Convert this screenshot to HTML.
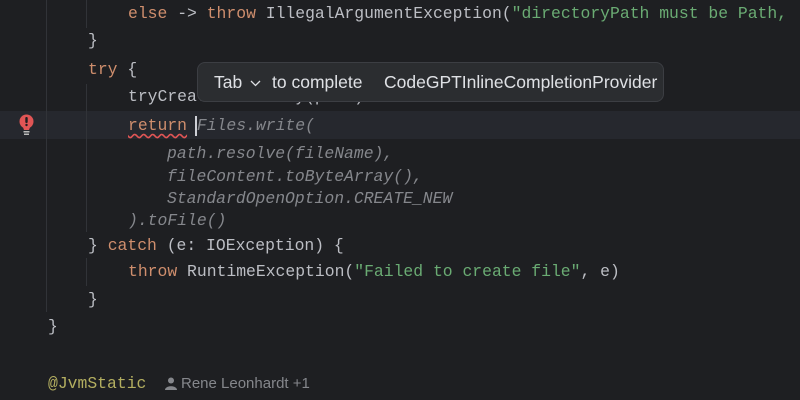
<!DOCTYPE html>
<html><head><meta charset="utf-8"><style>
body{margin:0;width:800px;height:400px;overflow:hidden;background:#1e1f22;position:relative;font-family:"Liberation Mono",monospace;font-size:16.4px;color:#bcbec4}
.l{position:absolute;white-space:pre;line-height:20px;height:20px}
.k{color:#cf8e6d}.s{color:#6aab73}.g{color:#85878c;font-style:italic}.a{color:#b3ae60}
.guide{position:absolute;width:1px;background:#313338}
.pop{position:absolute;left:197px;top:62px;width:467px;height:40px;background:#2b2d30;border:1px solid #3c3e43;border-radius:8px;box-sizing:border-box;font-family:"Liberation Sans",sans-serif;font-size:17.5px;color:#dfe1e5}
.pop span{position:absolute;top:9px;line-height:20px;white-space:pre}
</style></head><body>
<div style="position:absolute;left:0;top:111px;width:800px;height:28px;background:#26282e"></div>
<div class="guide" style="left:46px;top:0;height:312px"></div>
<div class="guide" style="left:86px;top:0;height:28px"></div>
<div class="guide" style="left:86px;top:84px;height:148px"></div>
<div class="guide" style="left:86px;top:258px;height:28px"></div>
<svg style="position:absolute;left:18px;top:114px" width="17" height="22" viewBox="0 0 17 22"><circle cx="8.5" cy="7.5" r="7" fill="#e05555"/><path d="M4.5 12 L12.5 12 L11 16 L6 16 Z" fill="#e05555"/><rect x="7.3" y="3" width="2.4" height="6" rx="1" fill="#1e1f22"/><circle cx="8.5" cy="11" r="1.2" fill="#1e1f22"/><rect x="5.5" y="17" width="6" height="1.5" fill="#bbb"/><rect x="6" y="19.5" width="5" height="1.5" fill="#bbb"/></svg>
<div class="l" style="left:128px;top:4px"><span class="k">else</span> -&gt; <span class="k">throw</span> IllegalArgumentException(<span class="s">"directoryPath must be Path,</span></div>
<div class="l" style="left:88px;top:31px">}</div>
<div class="l" style="left:88px;top:60px"><span class="k">try</span> {</div>
<div class="l" style="left:128px;top:87px">tryCreateDirectory(path)</div>
<div class="l" style="left:128px;top:116px"><span class="k" style="text-decoration:underline wavy #e05555;text-underline-offset:3px">return</span> <span class="g">Files.write(</span></div>
<div style="position:absolute;left:195px;top:116px;width:2px;height:20px;background:#ced0d6"></div>
<div class="l g" style="left:167px;top:144px">path.resolve(fileName),</div>
<div class="l g" style="left:167px;top:167px">fileContent.toByteArray(),</div>
<div class="l g" style="left:167px;top:189px">StandardOpenOption.CREATE_NEW</div>
<div class="l g" style="left:128px;top:211px">).toFile()</div>
<div class="l" style="left:88px;top:236px">} <span class="k">catch</span> (e: IOException) {</div>
<div class="l" style="left:128px;top:262px"><span class="k">throw</span> RuntimeException(<span class="s">"Failed to create file"</span>, e)</div>
<div class="l" style="left:88px;top:290px">}</div>
<div class="l" style="left:48px;top:317px">}</div>
<div class="l a" style="left:48px;top:374px">@JvmStatic</div>
<svg style="position:absolute;left:165px;top:377px" width="12" height="13" viewBox="0 0 12 13"><circle cx="6" cy="3.5" r="3" fill="#85878c"/><path d="M0 13 C0 8 12 8 12 13 Z" fill="#85878c"/></svg>
<div class="l" style="left:181px;top:374px;font-family:'Liberation Sans',sans-serif;font-size:15px;color:#85878c">Rene Leonhardt +1</div>
<div class="pop"><span style="left:16px">Tab</span><svg style="position:absolute;left:52px;top:17px" width="11" height="7" viewBox="0 0 11 7"><path d="M1 1 L5.5 5.5 L10 1" stroke="#dfe1e5" stroke-width="1.3" fill="none"/></svg><span style="left:74px">to complete</span><span style="left:186px">CodeGPTInlineCompletionProvider</span></div>
</body></html>
